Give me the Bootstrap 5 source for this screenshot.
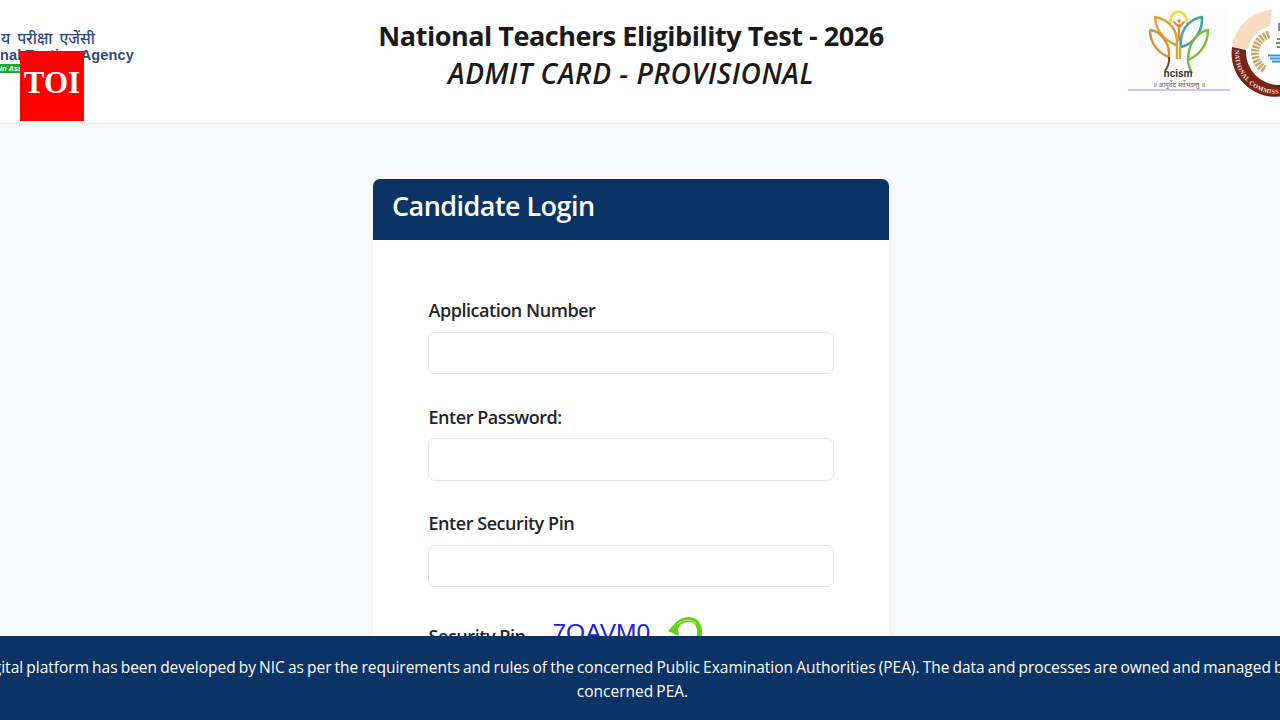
<!DOCTYPE html>
<html lang="en">
<head>
<meta charset="utf-8">
<title>NTET Admit Card</title>
<link href="https://cdn.jsdelivr.net/npm/bootstrap@5.3.0/dist/css/bootstrap.min.css" rel="stylesheet">
<style>
html,body{height:720px;overflow:hidden}
body{background:#f8f9fa;font-family:"Open Sans","Noto Sans",sans-serif;color:#212529}
.top-head{height:124px;background:#fff;border-bottom:1px solid #e9ecef;overflow:hidden}
.nta-logo{width:134px;height:100px;padding-top:30px;overflow:hidden;line-height:1;color:#2f4a80;white-space:nowrap;font-family:"Liberation Sans",sans-serif}
.nta-hi{font-family:"Noto Sans","Noto Sans CJK SC",sans-serif;font-size:15.5px;font-weight:500;height:18px;padding-right:39px;word-spacing:3px;margin-top:1px}
.nta-en{font-size:14.5px;font-weight:700;margin-top:-1px;letter-spacing:.15px}
.nta-strip{width:40px;height:9px;background:#22a82e;color:#fff;font-size:7.5px;font-style:italic;font-weight:700;overflow:hidden;margin-top:1px;line-height:9px}
.toi-badge{left:20px;top:51px;width:64px;height:70px;background:#f00;color:#fff;font-family:"Liberation Serif",serif;font-size:31px;font-weight:700;line-height:64px}
.title-main{font-size:27px;font-weight:700;line-height:37px;color:#1a1a1a;letter-spacing:-.47px}
.title-sub{font-size:28px;font-style:italic;font-weight:600;line-height:37px;color:#1a1a1a;letter-spacing:.53px;margin-top:1px}
.title-wrap{padding-top:17px}
.logo-right{width:152px;height:100px}
.logo-right svg{display:block}
.page-main{padding-right:18px;padding-top:55px}
.login-box{width:516px;border-radius:7px;box-shadow:0 2px 8px rgba(0,0,0,.04);background:#fff;overflow:hidden}
.login-top{background:#0b3365;color:#fff;height:61px;padding:0 19px;font-size:27px;font-weight:600;line-height:54px;letter-spacing:-.55px}
.login-body{padding:58px 55px 0}
.f-label{font-size:18px;font-weight:600;line-height:24px;margin-bottom:9.5px;color:#212529;letter-spacing:-.45px;padding-left:.5px}
.f-input{height:42.5px;border:1px solid #dee2e6;border-radius:7px}
.f-group{margin-bottom:30.5px}
.f-group-last{margin-bottom:30px}
.pin-row{height:40px}
.pin-label{margin-top:7px;margin-bottom:0}
.captcha-txt{font-family:"Liberation Sans",sans-serif;font-size:24.5px;color:#2020e0;line-height:30px;margin:1px 0 0 27px}
.captcha-reload{margin-left:18px;display:block}
.foot-bar{height:84px;background:#0b3365;color:#fff;overflow:hidden;font-size:15.5px;line-height:24px;padding-top:19px}
.foot-inner{width:1400px;margin-left:-67.500px;text-align:center;word-spacing:-.95px}
</style>
</head>
<body>
<header class="top-head position-relative d-flex justify-content-between align-items-start">
  <div class="nta-logo d-flex flex-column align-items-end">
    <div class="nta-hi">य परीक्षा एजेंसी</div>
    <div class="nta-en">National Testing Agency</div>
    <div class="nta-strip align-self-start">in Assessment</div>
  </div>
  <div class="title-wrap text-center">
    <div class="title-main">National Teachers Eligibility Test - 2026</div>
    <div class="title-sub">ADMIT CARD - PROVISIONAL</div>
  </div>
  <div class="logo-right">
    <svg width="152" height="100" viewBox="1128 0 152 100" fill="none" xmlns="http://www.w3.org/2000/svg">
      <rect x="1128" y="8" width="102" height="82" fill="#fcfcfc"/>
      <path d="M1170 23C1170 8 1187 8 1187 23" stroke="#f6d93e" stroke-width="2.6" stroke-linecap="round"/>
      <path d="M1155 17C1170 20 1178 30 1177 45C1166 42 1156 32 1155 17Z" stroke="#dc9f3e" stroke-width="2.4" stroke-linejoin="round"/>
      <path d="M1150 30C1160 31 1170 42 1169 57C1158 53 1150 43 1150 30Z" stroke="#d9903a" stroke-width="2.4" stroke-linejoin="round"/>
      <path d="M1202 17C1188 19 1179 32 1181 47C1194 44 1203 31 1202 17Z" stroke="#3fa89a" stroke-width="2.6" stroke-linejoin="round"/>
      <path d="M1208 30C1197 32 1188 44 1188 60C1200 55 1208 44 1208 30Z" stroke="#7fb93c" stroke-width="2.4" stroke-linejoin="round"/>
      <path d="M1169 57C1170 63 1167 68 1165 71" stroke="#5b4a2e" stroke-width="2"/>
      <path d="M1177 45V59" stroke="#dca53c" stroke-width="2.4"/>
      <path d="M1180 47V59" stroke="#a7c23f" stroke-width="2.4"/>
      <path d="M1188 60C1188 65 1190 69 1192 73" stroke="#6fb23c" stroke-width="2.2"/>
      <circle cx="1179" cy="21" r="1.8" fill="#e8842c"/>
      <path d="M1174 22L1179 27L1184 22M1179 25V40" stroke="#e8842c" stroke-width="2" stroke-linecap="round"/>
      <text x="1178" y="77" text-anchor="middle" font-family="Liberation Sans,sans-serif" font-size="10" font-weight="700" fill="#333">ncism</text>
      <text x="1179" y="87" text-anchor="middle" font-family="Noto Sans,sans-serif" font-size="6.5" fill="#666">॥ आयुर्वेद सर्वेभवन्तु ॥</text>
      <path d="M1128 90H1230" stroke="#9a94cf" stroke-width="1.2"/>
      <path d="M1232 47A43.5 43.5 0 0 1 1272 9.600L1270 26.500A27 27 0 0 0 1248 49Z" fill="#f9dcc0"/>
      <path d="M1232 47A43.5 43.5 0 0 0 1280 96.500L1280 85A33 33 0 0 1 1246 50Z" fill="#7a2418"/>
      <path id="sealArc" d="M1235 50A41 41 0 0 0 1280 93.500"/>
      <text font-family="Liberation Serif,serif" font-size="6.2" font-weight="700" fill="#f3e3d3" letter-spacing=".35"><textPath href="#sealArc">NATIONAL COMMISSION</textPath></text>
      <path d="M1269 34.500A19 19 0 0 0 1265 69.500" stroke="#c8a868" stroke-width="8" stroke-dasharray="2.4 1.1"/>
      <path d="M1268 55.500H1280M1270 58.500H1280M1272 61.500H1280" stroke="#3b93d6" stroke-width="2"/>
      <path d="M1277 39H1280M1276 43H1280M1277 47H1280" stroke="#555" stroke-width="1.6"/>
      <path d="M1278 23H1280V31H1278Z" fill="#888"/>
    </svg>
  </div>
</header>
<div class="toi-badge position-absolute text-center">TOI</div>
<main class="page-main d-flex justify-content-center">
  <div class="login-box">
    <div class="login-top">Candidate Login</div>
    <div class="login-body">
      <div class="f-group"><div class="f-label">Application Number</div><div class="f-input"></div></div>
      <div class="f-group"><div class="f-label">Enter Password:</div><div class="f-input"></div></div>
      <div class="f-group-last"><div class="f-label">Enter Security Pin</div><div class="f-input"></div></div>
      <div class="pin-row d-flex align-items-start">
        <div class="f-label pin-label">Security Pin</div>
        <div class="captcha-txt">7OAVM0</div>
        <svg class="captcha-reload" width="34" height="34" viewBox="0 0 34 34" xmlns="http://www.w3.org/2000/svg">
          <path d="M8 10C13 1 26 0 30 8C32 12 32 16 31 20" fill="none" stroke="#5fd010" stroke-width="5"/>
          <path d="M9 8C14 2 24 2 28 7" fill="none" stroke="#9cf050" stroke-width="1.5"/>
          <path d="M0 14L9 4L11 19Z" fill="#62d412"/>
        </svg>
      </div>
    </div>
  </div>
</main>
<footer class="foot-bar fixed-bottom">
  <div class="foot-inner">This digital platform has been developed by NIC as per the requirements and rules of the concerned Public Examination Authorities (PEA). The data and processes are owned and managed by the concerned PEA.</div>
</footer>
</body>
</html>
